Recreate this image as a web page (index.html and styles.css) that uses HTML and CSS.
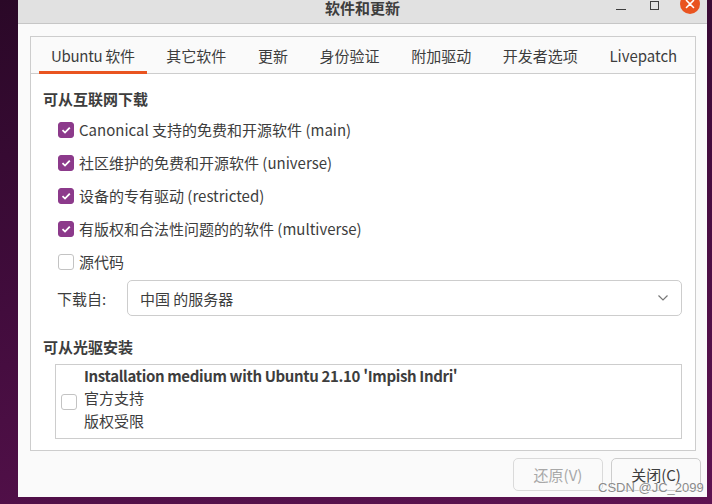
FILE: index.html
```html
<!DOCTYPE html>
<html lang="zh-CN">
<head>
    <meta charset="UTF-8">
    <meta name="viewport" content="width=device-width, initial-scale=1.0">
    <title>软件和更新</title>
    <link rel="stylesheet" href="styles.css">
</head>
<body>
    <div class="window">
        <div class="titlebar">
            <div></div>
            <div class="title">软件和更新</div>
            <div class="controls">
                <span class="ctl-min"></span>
                <span class="ctl-max"></span>
                <span class="ctl-close">
                    <svg width="10" height="10" viewBox="0 0 10 10"><path d="M1.5 1.5 L8.5 8.5 M8.5 1.5 L1.5 8.5" stroke="#fff" stroke-width="1.6" stroke-linecap="round"/></svg>
                </span>
            </div>
        </div>

        <div class="content">
            <div class="notebook">
                <div class="tabs">
                    <div class="tab active">Ubuntu 软件</div>
                    <div class="tab">其它软件</div>
                    <div class="tab">更新</div>
                    <div class="tab">身份验证</div>
                    <div class="tab">附加驱动</div>
                    <div class="tab">开发者选项</div>
                    <div class="tab">Livepatch</div>
                </div>

                <div class="page">
                    <div class="heading">可从互联网下载</div>
                    <div class="checks">
                        <label class="check"><span class="box on"></span>Canonical 支持的免费和开源软件 (main)</label>
                        <label class="check"><span class="box on"></span>社区维护的免费和开源软件 (universe)</label>
                        <label class="check"><span class="box on"></span>设备的专有驱动 (restricted)</label>
                        <label class="check"><span class="box on"></span>有版权和合法性问题的的软件 (multiverse)</label>
                        <label class="check"><span class="box"></span>源代码</label>
                    </div>

                    <div class="source-row">
                        <span class="source-label">下载自:</span>
                        <div class="combo">
                            <span>中国 的服务器</span>
                            <svg width="12" height="8" viewBox="0 0 12 8"><path d="M1.5 1.5 L6 6 L10.5 1.5" fill="none" stroke="#777" stroke-width="1.2"/></svg>
                        </div>
                    </div>

                    <div class="heading heading-cd">可从光驱安装</div>
                    <div class="listbox">
                        <span class="box"></span>
                        <div class="cd-text">
                            <div class="cd-name">Installation medium with Ubuntu 21.10 'Impish Indri'</div>
                            <div>官方支持</div>
                            <div>版权受限</div>
                        </div>
                    </div>
                </div>
            </div>
        </div>

        <div class="actions">
            <button class="btn" disabled>还原(V)</button>
            <button class="btn">关闭(C)</button>
        </div>
    </div>

    <div class="watermark">CSDN @JC_2099</div>
</body>
</html>
```

FILE: styles.css
```css
body {
    margin: 0;
    width: 712px;
    height: 504px;
    overflow: hidden;
    font-family: "Noto Sans CJK SC", "Noto Sans", sans-serif;
    font-size: 15px;
    color: #3d3d3d;
    background: linear-gradient(165deg, #2a0827 0%, #420c3d 45%, #5e1352 100%);
}

.window {
    margin-left: 18px;
    width: 689px;
    height: 497px;
    background-color: #fafafa;
    display: flex;
    flex-direction: column;
}

/* title bar */
.titlebar {
    height: 23px;
    background-color: #e1e1e1;
    border-bottom: 1px solid #c6c6c6;
    display: grid;
    grid-template-columns: 1fr auto 1fr;
    align-items: start;
    overflow: hidden;
}

.title {
    font-weight: bold;
    line-height: 16px;
}

.controls {
    display: flex;
    justify-content: flex-end;
    align-items: flex-start;
    padding-right: 7px;
}

.ctl-min {
    width: 10px;
    height: 1px;
    background-color: #3d3d3d;
    margin-top: 9px;
    margin-right: 24px;
}

.ctl-max {
    width: 7px;
    height: 7px;
    border: 1px solid #3d3d3d;
    margin-top: 1px;
    margin-right: 21px;
}

.ctl-close {
    width: 20px;
    height: 20px;
    border-radius: 50%;
    background-color: #e95420;
    margin-top: -6px;
    display: flex;
    align-items: center;
    justify-content: center;
}

/* notebook */
.content {
    padding: 12px 11px 0 12px;
}

.notebook {
    height: 413px;
    border: 1px solid #cdcdcd;
    display: flex;
    flex-direction: column;
}

.tabs {
    height: 36px;
    border-bottom: 1px solid #cdcdcd;
    display: flex;
    gap: 7.6px;
    padding-left: 8px;
    background-color: #fafafa;
}

.tab {
    padding: 2px 12px 0;
    display: flex;
    align-items: center;
    border-bottom: 3px solid transparent;
    margin-bottom: -1px;
}

.tab.active {
    border-bottom-color: #e95420;
    letter-spacing: -0.3px;
}

.page {
    flex: 1;
    background-color: #ffffff;
    padding: 15px 13px 0 12px;
}

.heading {
    font-weight: bold;
    line-height: 20px;
}

.checks {
    margin-top: 4px;
    padding-left: 15px;
}

.check {
    height: 33px;
    display: flex;
    align-items: center;
    gap: 5px;
}

.box {
    width: 14px;
    height: 14px;
    border: 1px solid #c3c3c3;
    border-radius: 3px;
    background-color: #fff;
    flex-shrink: 0;
}

.box.on {
    border-color: #8c3a8b;
    background: #8c3a8b url("data:image/svg+xml,%3Csvg xmlns='http://www.w3.org/2000/svg' width='14' height='14' viewBox='0 0 14 14'%3E%3Cpath d='M3.5 7.2 L6 9.6 L10.8 4.6' fill='none' stroke='white' stroke-width='1.8'/%3E%3C/svg%3E") center no-repeat;
}

.source-row {
    margin-top: 2px;
    display: flex;
    align-items: center;
    padding-left: 14px;
}

.source-label {
    width: 70px;
}

.combo {
    flex: 1;
    height: 34px;
    border: 1px solid #cdcdcd;
    border-radius: 5px;
    background-color: #fff;
    display: flex;
    align-items: center;
    justify-content: space-between;
    padding: 0 12px;
}

.heading-cd {
    margin-top: 21px;
}

.listbox {
    margin: 7px 0 0 12px;
    height: 73px;
    border: 1px solid #cdcdcd;
    background-color: #fff;
    display: flex;
    align-items: center;
    gap: 7px;
    padding-left: 5px;
}

.cd-text {
    line-height: 22.5px;
    margin-top: -6px;
}

.cd-name {
    font-weight: bold;
    letter-spacing: -0.35px;
}

/* bottom buttons */
.actions {
    display: flex;
    justify-content: flex-end;
    gap: 8px;
    padding: 7px 6px 0 0;
}

.btn {
    width: 90px;
    height: 33px;
    font-family: inherit;
    font-size: 15px;
    color: #3d3d3d;
    background-color: #fafafa;
    border: 1px solid #cdcdcd;
    border-radius: 5px;
}

.btn:disabled {
    color: #a8a8a8;
    border-color: #dadada;
}

.watermark {
    position: absolute;
    left: 598px;
    top: 480px;
    font-family: "Liberation Sans", sans-serif;
    font-size: 13px;
    color: #8a8a8a;
    text-shadow: 0 0 2px #fff, 0 0 1px #fff;
}
```
